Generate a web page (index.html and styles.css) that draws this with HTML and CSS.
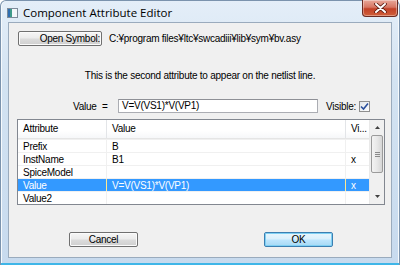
FILE: index.html
```html
<!DOCTYPE html>
<html lang="en">
<head>
    <meta charset="UTF-8">
    <title>Component Attribute Editor</title>
    <link rel="stylesheet" href="styles.css">
</head>
<body>
    <div class="window">
        <div class="titlebar">
            <span class="app-icon">
                <svg width="11" height="10" viewBox="0 0 11 10"><rect x="0.5" y="0.5" width="10" height="9" fill="#f4f7fa" stroke="#7d8b99"/><rect x="1" y="1" width="4" height="8" fill="#3f9a8a"/><rect x="1" y="1" width="2" height="8" fill="#2f6fb0"/></svg>
            </span>
            <span class="title">Component Attribute Editor</span>
            <button class="close" title="Close">
                <svg width="13" height="10" viewBox="0 0 13 10"><path d="M2 1 L11 9 M11 1 L2 9" stroke="#5a1a10" stroke-width="3.6" stroke-linecap="round"/><path d="M2 1 L11 9 M11 1 L2 9" stroke="#fff" stroke-width="2" stroke-linecap="round"/></svg>
            </button>
        </div>
        <div class="client">
            <div class="symbol-row">
                <button class="btn open-symbol">Open Symbol:</button>
                <span class="path">C:¥program files¥ltc¥swcadiii¥lib¥sym¥bv.asy</span>
            </div>
            <div class="message">This is the second attribute to appear on the netlist line.</div>
            <div class="value-row">
                <span class="label">Value</span>
                <span class="equals">=</span>
                <div class="input">V=V(VS1)*V(VP1)</div>
                <span class="visible">Visible:</span>
                <span class="check">
                    <svg width="9" height="9" viewBox="0 0 9 9"><path d="M1 4.5 L3.5 7 L8 1.5" fill="none" stroke="#2a4f9c" stroke-width="1.6"/></svg>
                </span>
            </div>
            <div class="attr-table">
                <div class="cols">
                    <div class="row head">
                        <div class="cell">Attribute</div>
                        <div class="cell">Value</div>
                        <div class="cell">Vi...</div>
                    </div>
                    <div class="row">
                        <div class="cell">Prefix</div>
                        <div class="cell">B</div>
                        <div class="cell"></div>
                    </div>
                    <div class="row">
                        <div class="cell">InstName</div>
                        <div class="cell">B1</div>
                        <div class="cell">x</div>
                    </div>
                    <div class="row">
                        <div class="cell">SpiceModel</div>
                        <div class="cell"></div>
                        <div class="cell"></div>
                    </div>
                    <div class="row selected">
                        <div class="cell">Value</div>
                        <div class="cell">V=V(VS1)*V(VP1)</div>
                        <div class="cell">x</div>
                    </div>
                    <div class="row">
                        <div class="cell">Value2</div>
                        <div class="cell"></div>
                        <div class="cell"></div>
                    </div>
                </div>
                <div class="scrollbar">
                    <div class="arrow">
                        <svg width="5" height="3" viewBox="0 0 5 3"><path d="M0 3 L2.5 0 L5 3 Z" fill="#404040"/></svg>
                    </div>
                    <div class="thumb">
                        <svg width="5" height="5" viewBox="0 0 5 5"><path d="M0 0.5 H5 M0 2.5 H5 M0 4.5 H5" stroke="#8a8a8a"/></svg>
                    </div>
                    <div class="track"></div>
                    <div class="arrow">
                        <svg width="5" height="3" viewBox="0 0 5 3"><path d="M0 0 L2.5 3 L5 0 Z" fill="#404040"/></svg>
                    </div>
                </div>
            </div>
            <div class="actions">
                <button class="btn">Cancel</button>
                <button class="btn default">OK</button>
            </div>
        </div>
    </div>
</body>
</html>
```

FILE: styles.css
```css
body {
    margin: 0;
    padding: 0;
    font-family: 'Liberation Sans', Arial, sans-serif;
    font-size: 10px;
    letter-spacing: -0.25px;
    color: #000;
    background: #fff;
}
.window {
    width: 400px;
    height: 265px;
    box-sizing: border-box;
    display: flex;
    flex-direction: column;
    padding: 0 7px 7px 7px;
    background: linear-gradient(180deg, #e4eef8 0%, #d3e3f2 30%, #c7daee 100%);
    border: 1px solid #7b93ad;
    border-bottom: none;
    border-radius: 6px 6px 0 0;
    box-shadow: inset 0 -2px 0 #3fb6e8, inset 1px 0 0 #f6fafd, inset -1px 0 0 #f6fafd;
}
.titlebar {
    height: 21px;
    display: flex;
    align-items: center;
    position: relative;
}
.app-icon {
    display: flex;
    width: 11px;
    height: 10px;
    margin-left: -1px;
    margin-top: 2px;
}
.title {
    margin-left: 5px;
    margin-top: 2px;
    font-family: 'Open Sans', 'Liberation Sans', sans-serif;
    font-size: 11.5px;
    letter-spacing: 0;
    color: #000;
}
.close {
    position: absolute;
    right: -6px;
    top: -1px;
    width: 36px;
    height: 17px;
    padding: 0;
    border: 1px solid #6b2b22;
    border-top: none;
    border-radius: 0 0 4px 4px;
    background: linear-gradient(180deg, #e9a89a 0%, #d77663 45%, #c24127 55%, #d0603a 100%);
    box-shadow: inset 0 0 0 1px rgba(255,255,255,0.35);
    display: flex;
    align-items: center;
    justify-content: center;
}
.client {
    flex: 1;
    display: flex;
    flex-direction: column;
    background: #f0f0f0;
    border: 1px solid #9aabbd;
}
.btn {
    font-family: 'Liberation Sans', Arial, sans-serif;
    font-size: 10px;
    letter-spacing: -0.25px;
    color: #000;
    height: 15px;
    padding: 0 2px;
    border: 1px solid #707070;
    border-radius: 2px;
    background: linear-gradient(180deg, #f6f6f6 0%, #ebebeb 48%, #dcdcdc 52%, #cfcfcf 100%);
    box-shadow: inset 0 0 0 1px #fbfbfb;
    line-height: 12px;
}
.symbol-row {
    display: flex;
    align-items: center;
    margin: 8px 0 0 9px;
    height: 15px;
}
.open-symbol {
    width: 84px;
    text-align: right;
    padding-right: 1px;
}
.path {
    margin-left: 7px;
}
.message {
    margin-top: 24px;
    height: 12px;
    line-height: 12px;
    text-align: center;
}
.value-row {
    display: flex;
    align-items: center;
    height: 14px;
    margin-top: 17px;
    padding-left: 64px;
}
.label {
    width: 29px;
}
.equals {
    width: 16px;
}
.input {
    width: 195px;
    height: 12px;
    line-height: 12px;
    padding-left: 3px;
    background: #fff;
    border: 1px solid #abadb3;
    border-top-color: #8e9096;
}
.visible {
    margin-left: 8px;
}
.check {
    margin-left: 3px;
    width: 11px;
    height: 11px;
    box-sizing: border-box;
    border: 1px solid #8f8f8f;
    background: linear-gradient(135deg, #e2e6ea 0%, #fdfdfd 100%);
    display: flex;
    align-items: center;
    justify-content: center;
}
.attr-table {
    margin: 6px 0 0 8px;
    width: 368px;
    height: 86px;
    box-sizing: border-box;
    border: 1px solid #828790;
    background: #fff;
    display: flex;
}
.cols {
    width: 351px;
    display: flex;
    flex-direction: column;
}
.row {
    display: grid;
    grid-template-columns: 89px 239px 23px;
    height: 13px;
    line-height: 14px;
    border-top: 1px solid #f0f0f0;
    box-sizing: border-box;
}
.row .cell {
    padding-left: 5px;
    border-right: 1px solid #f0f0f0;
    white-space: nowrap;
    overflow: hidden;
}
.row .cell:last-child {
    border-right: none;
}
.row.head {
    height: 19px;
    line-height: 18px;
    border-top: none;
    border-bottom: 1px solid #e5e5e5;
    background: linear-gradient(180deg, #ffffff 0%, #ffffff 60%, #f6f7f9 100%);
}
.row.head .cell {
    border-right: 1px solid #e3e5e8;
}
.row.head .cell:last-child {
    border-right: none;
}
.row.selected {
    background: #3399ff;
    color: #fff;
}
.row.selected .cell {
    border-right-color: #ffe98f;
}
.scrollbar {
    width: 15px;
    display: flex;
    flex-direction: column;
    background: #f0f0f0;
    border-left: 1px solid #e9e9e9;
    box-sizing: border-box;
}
.scrollbar .arrow {
    height: 15px;
    display: flex;
    align-items: center;
    justify-content: center;
}
.scrollbar .thumb {
    height: 38px;
    margin: 0 1px;
    border: 1px solid #9b9b9b;
    border-radius: 2px;
    background: linear-gradient(90deg, #f3f3f3 0%, #e8e8e8 50%, #d6d6d6 100%);
    display: flex;
    align-items: center;
    justify-content: center;
    box-sizing: border-box;
}
.scrollbar .track {
    flex: 1;
}
.actions {
    display: flex;
    margin-top: 27px;
    padding-left: 60px;
}
.actions .btn {
    width: 69px;
    text-align: center;
}
.actions .default {
    margin-left: 126px;
    border-color: #3c7fb1;
    box-shadow: inset 0 0 0 1px #7fd0f3;
    background: linear-gradient(180deg, #eaf6fd 0%, #d9f0fc 48%, #bee6fd 52%, #a7d9f5 100%);
}
```
